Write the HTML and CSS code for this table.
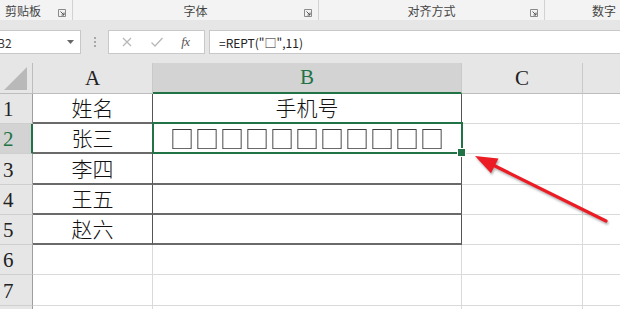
FILE: index.html
```html
<!DOCTYPE html>
<html lang="zh-CN">
<head>
<meta charset="utf-8">
<title>REPT</title>
<link rel="stylesheet" href="styles.css">
</head>
<body>
<div class="page">
  <div class="ribbon">
    <div class="group g1"><span class="glabel">剪贴板</span><span class="launcher"><svg width="8" height="8" viewBox="0 0 8 8"><path d="M0.5 0.5H7.5V7.5H0.5Z" fill="none" stroke="#8a8a8a"/><path d="M2.5 2.5L6 6M6 3.5V6H3.5" fill="none" stroke="#555"/></svg></span></div>
    <div class="group g2"><span class="glabel">字体</span><span class="launcher"><svg width="8" height="8" viewBox="0 0 8 8"><path d="M0.5 0.5H7.5V7.5H0.5Z" fill="none" stroke="#8a8a8a"/><path d="M2.5 2.5L6 6M6 3.5V6H3.5" fill="none" stroke="#555"/></svg></span></div>
    <div class="group g3"><span class="glabel">对齐方式</span><span class="launcher"><svg width="8" height="8" viewBox="0 0 8 8"><path d="M0.5 0.5H7.5V7.5H0.5Z" fill="none" stroke="#8a8a8a"/><path d="M2.5 2.5L6 6M6 3.5V6H3.5" fill="none" stroke="#555"/></svg></span></div>
    <div class="group g4"><span class="glabel">数字</span></div>
  </div>
  <div class="fbar">
    <div class="namebox"><span class="nbtext">B2</span><svg class="caret" width="7" height="4" viewBox="0 0 7 4"><path d="M0 0H7L3.5 4Z" fill="#666"/></svg></div>
    <div class="dots"><i></i><i></i><i></i></div>
    <div class="fxbox">
      <svg width="12" height="12" viewBox="0 0 12 12"><path d="M2 2L10 10M10 2L2 10" stroke="#b8b8b8" stroke-width="1.3" fill="none"/></svg>
      <svg width="14" height="12" viewBox="0 0 14 12"><path d="M1.5 6.5L5 10L12.5 2" stroke="#b8b8b8" stroke-width="1.3" fill="none"/></svg>
      <span class="fx">fx</span>
    </div>
    <div class="finput">=REPT("□",11)</div>
  </div>
  <div class="sheet">
    <div class="corner"><svg width="24" height="24" viewBox="0 0 24 24"><path d="M23 0V23H0Z" fill="#b9b9b9"/></svg></div>
    <div class="ch">A</div>
    <div class="ch sel">B</div>
    <div class="ch">C</div>
    <div class="ch last"></div>

    <div class="rh">1</div>
    <div class="c t">姓名</div>
    <div class="c t">手机号</div>
    <div class="c"></div>
    <div class="c last"></div>

    <div class="rh sel">2</div>
    <div class="c t">张三</div>
    <div class="c t active"><span class="boxes">□□□□□□□□□□□</span></div>
    <div class="c"></div>
    <div class="c last"></div>

    <div class="rh">3</div>
    <div class="c t">李四</div>
    <div class="c t"></div>
    <div class="c"></div>
    <div class="c last"></div>

    <div class="rh">4</div>
    <div class="c t">王五</div>
    <div class="c t"></div>
    <div class="c"></div>
    <div class="c last"></div>

    <div class="rh">5</div>
    <div class="c t">赵六</div>
    <div class="c t"></div>
    <div class="c"></div>
    <div class="c last"></div>

    <div class="rh">6</div>
    <div class="c"></div>
    <div class="c"></div>
    <div class="c"></div>
    <div class="c last"></div>

    <div class="rh">7</div>
    <div class="c"></div>
    <div class="c"></div>
    <div class="c"></div>
    <div class="c last"></div>

    <div class="rh"></div>
    <div class="c"></div>
    <div class="c"></div>
    <div class="c"></div>
    <div class="c last"></div>
  </div>
  <svg class="arrow" width="620" height="309" viewBox="0 0 620 309">
    <line x1="606" y1="221" x2="492" y2="164.5" stroke="#ec1c24" stroke-width="3.2" stroke-linecap="round"/>
    <polygon points="475,156 498.5,158.4 491,173.2" fill="#ec1c24"/>
  </svg>
</div>
</body>
</html>
```
FILE: styles.css
```css
* { box-sizing: border-box; }
html, body { margin: 0; padding: 0; }
body {
  width: 620px;
  height: 309px;
  overflow: hidden;
  background: #ffffff;
  font-family: "Noto Sans CJK SC", "Noto Sans", sans-serif;
}
.page { position: relative; width: 620px; height: 309px; overflow: hidden; }

.ribbon {
  height: 20px;
  background: #f3f3f3;
  display: flex;
  font-size: 12px;
  color: #444;
}
.group {
  position: relative;
  display: flex;
  align-items: center;
  justify-content: center;
  height: 20px;
  border-right: 1px solid #d2d2d2;
  padding-top: 2px;
}
.g1 { width: 73px; justify-content: flex-start; padding-left: 5px; }
.g2 { width: 246px; }
.g3 { width: 226px; }
.g4 { flex: 1; border-right: none; justify-content: flex-end; padding-right: 4px; }
.glabel { line-height: 14px; }
.launcher {
  position: absolute;
  right: 6px;
  top: 9px;
  width: 8px;
  height: 8px;
  display: block;
  line-height: 0;
}

.fbar {
  height: 43px;
  background: #e6e6e6;
  display: flex;
  align-items: flex-start;
  padding-top: 10px;
}
.namebox {
  width: 81px;
  height: 24px;
  background: #fff;
  border: 1px solid #c8c8c8;
  border-left: none;
  display: flex;
  align-items: center;
  justify-content: space-between;
  padding-right: 6px;
  font-size: 12px;
  color: #333;
  overflow: hidden;
}
.nbtext { margin-left: -3px; }
.caret { display: block; }
.dots {
  width: 27px;
  height: 24px;
  display: flex;
  flex-direction: column;
  align-items: center;
  justify-content: center;
  gap: 2px;
}
.dots i { display: block; width: 2px; height: 2px; background: #a8a8a8; }
.fxbox {
  width: 97px;
  height: 24px;
  background: #fff;
  border: 1px solid #c8c8c8;
  display: flex;
  align-items: center;
  justify-content: space-around;
  padding: 0 6px 0 4px;
}
.fxbox svg { display: block; }
.fx {
  font-family: "Liberation Serif", serif;
  font-style: italic;
  font-size: 13px;
  color: #555;
  letter-spacing: -0.5px;
}
.finput {
  flex: 1;
  margin-left: 4px;
  height: 24px;
  background: #fff;
  border: 1px solid #c8c8c8;
  border-right: none;
  font-size: 12px;
  color: #222;
  display: flex;
  align-items: center;
  padding-left: 9px;
}

.sheet {
  display: grid;
  grid-template-columns: 33px 120px 309px 121px 1fr;
  grid-template-rows: 31px 30px 30px 31px 30px 30px 30px 31px 30px;
}
.corner {
  background: #e6e6e6;
  border-right: 1px solid #bdbdbd;
  border-bottom: 1px solid #bdbdbd;
  display: flex;
  align-items: flex-end;
  justify-content: flex-end;
  padding: 0 4px 2px 0;
}
.corner svg { display: block; }
.ch {
  background: #e6e6e6;
  border-right: 1px solid #c9c9c9;
  border-bottom: 1px solid #bdbdbd;
  font-family: "Liberation Serif", serif;
  font-size: 21px;
  color: #222;
  display: flex;
  align-items: center;
  justify-content: center;
}
.ch.sel {
  background: #d3d3d3;
  color: #217346;
  border-bottom: 2px solid #217346;
}
.ch.last { border-right: none; }
.rh {
  background: #e6e6e6;
  border-right: 1px solid #9e9e9e;
  border-bottom: 1px solid #cfcfcf;
  font-family: "Liberation Serif", serif;
  font-size: 21px;
  color: #222;
  display: flex;
  align-items: center;
  justify-content: flex-start;
  padding-left: 3px;
  padding-top: 2px;
}
.rh.sel {
  background: #d3d3d3;
  color: #217346;
  border-right: 2px solid #217346;
}
.c {
  background: #fff;
  border-right: 1px solid #dadada;
  border-bottom: 1px solid #dadada;
  display: flex;
  align-items: center;
  justify-content: center;
  font-size: 21px;
  line-height: 1.2;
  color: #111;
  font-family: "Noto Sans CJK SC", sans-serif;
  font-weight: 300;
}
.c.last { border-right: none; }
.c.t {
  border-right: 1px solid #555;
  border-bottom: 2px solid #6a6a6a;
}
.c.active { position: relative; }
.c.active::after {
  content: "";
  position: absolute;
  left: -1px;
  top: -2px;
  right: -2px;
  bottom: -2px;
  border: 2px solid #217346;
}
.c.active::before {
  content: "";
  position: absolute;
  right: -5px;
  bottom: -5px;
  width: 7px;
  height: 7px;
  background: #217346;
  border: 1px solid #fff;
  z-index: 2;
}
.boxes {
  display: inline-block;
  font-family: "Noto Sans CJK SC", sans-serif;
  font-size: 24px;
  font-weight: 400;
  color: #3a3a3a;
  letter-spacing: 1px;
  margin-right: -1px;
  line-height: 1;
  transform: translateZ(0);
}

.arrow {
  position: absolute;
  left: 0;
  top: 0;
  pointer-events: none;
  filter: drop-shadow(1px 2px 1px rgba(0, 0, 0, 0.3));
}
```
